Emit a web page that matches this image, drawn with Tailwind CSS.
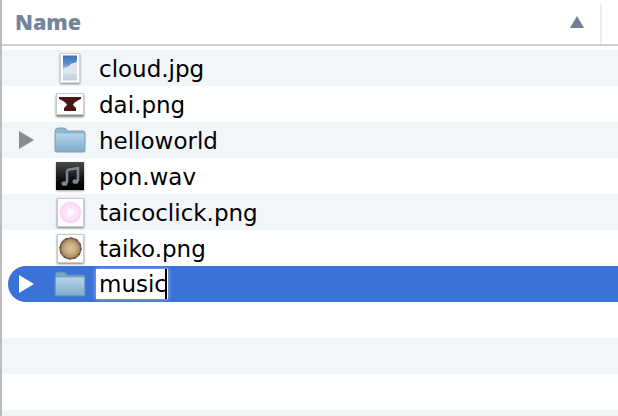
<!DOCTYPE html>
<html lang="en">
<head>
  <meta charset="UTF-8">
  <title>Finder list</title>
  <script src="https://cdn.jsdelivr.net/npm/@tailwindcss/browser@4"></script>
</head>
<body class="bg-white overflow-hidden">
  <div class="w-[618px] h-[416px] overflow-hidden border-l-2 border-[#bdbdbd] font-['DejaVu_Sans',sans-serif] text-black">
    <!-- Header -->
    <div class="h-[46px] border-b-2 border-[#cfcfcf] flex items-center relative">
      <span class="ml-[13px] text-[21.5px] font-extrabold text-[#76849a] font-['Open_Sans',sans-serif]">Name</span>
      <svg class="absolute left-[568px] top-[16px]" width="14" height="12" viewBox="0 0 14 12"><path d="M7 0L14 12H0Z" fill="#6f7f95"/></svg>
      <div class="absolute left-[598px] top-[4px] w-[2px] h-[40px] bg-[#ececec]"></div>
    </div>
    <div class="h-[4px]"></div>

    <!-- Rows -->
    <div class="h-[36px] bg-[#f2f5fa] flex items-center">
      <div class="w-[52px]"></div>
      <div class="w-[32px] flex justify-center drop-shadow-[0_1px_1px_rgba(0,0,0,0.45)]">
        <svg width="20" height="30" viewBox="0 0 20 30">
          <defs><linearGradient id="sky" x1="0" y1="0" x2="0" y2="1"><stop offset="0" stop-color="#3a70bd"/><stop offset="0.35" stop-color="#5f8ecb"/><stop offset="0.6" stop-color="#d5dfeb"/><stop offset="1" stop-color="#c3d0e0"/></linearGradient></defs>
          <rect x="0.500" y="0.500" width="19" height="29" fill="#fff" stroke="#d0d3d8"/>
          <rect x="3" y="2.500" width="14" height="25" fill="url(#sky)"/>
          <path d="M3 17C5 13 8 15 10 12C12 9 15 11 17 8V21H3Z" fill="#dde5ee"/>
        </svg>
      </div>
      <span class="ml-[13px] pt-[2px] text-[23px]">cloud.jpg</span>
    </div>

    <div class="h-[36px] flex items-center">
      <div class="w-[52px]"></div>
      <div class="w-[32px] flex justify-center drop-shadow-[0_2px_1px_rgba(0,0,0,0.5)]">
        <svg width="28" height="22" viewBox="0 0 28 22">
          <rect x="0.500" y="0.500" width="27" height="21" fill="#fff" stroke="#c8c8c8"/>
          <path d="M3 4H25V6C21 8 18 9 17 12L20 15V18H8V15L11 12C10 9 7 8 3 6Z" fill="#4a1512"/>
        </svg>
      </div>
      <span class="ml-[13px] pt-[2px] text-[23px]">dai.png</span>
    </div>

    <div class="h-[36px] bg-[#f2f5fa] flex items-center">
      <svg class="ml-[17px]" width="15" height="18" viewBox="0 0 15 18"><path d="M0 0L15 9L0 18Z" fill="#8b8b8b"/></svg>
      <div class="w-[20px]"></div>
      <div class="w-[32px] flex justify-center">
        <svg width="32" height="26" viewBox="0 0 32 26">
          <defs><linearGradient id="f1" x1="0" y1="0" x2="0" y2="1"><stop offset="0" stop-color="#b6d4e8"/><stop offset="1" stop-color="#7faccb"/></linearGradient></defs>
          <path d="M1 5Q1 1 4 1H10Q12 1 13 4H29Q31 4 31 6V24Q31 25 29 25H3Q1 25 1 24Z" fill="#91b8d3" stroke="#7a9fba"/>
          <rect x="1.500" y="6" width="29" height="18.500" rx="1" fill="url(#f1)" stroke="#7aa2bf" stroke-width="0.500"/>
        </svg>
      </div>
      <span class="ml-[13px] pt-[2px] text-[23px]">helloworld</span>
    </div>

    <div class="h-[36px] flex items-center">
      <div class="w-[52px]"></div>
      <div class="w-[32px] flex justify-center drop-shadow-[0_1px_1px_rgba(0,0,0,0.4)]">
        <svg width="28" height="28" viewBox="0 0 28 28">
          <defs><linearGradient id="blk" x1="0" y1="0" x2="0" y2="1"><stop offset="0" stop-color="#4a4a4c"/><stop offset="0.6" stop-color="#111"/><stop offset="1" stop-color="#000"/></linearGradient></defs>
          <rect width="28" height="28" fill="url(#blk)"/>
          <path d="M11 8L22 6V19" fill="none" stroke="#7f8597" stroke-width="2.500"/>
          <path d="M11 8V21" stroke="#7f8597" stroke-width="2.500"/>
          <ellipse cx="8.500" cy="21.500" rx="3" ry="2.300" fill="#7f8597"/>
          <ellipse cx="19.500" cy="19.500" rx="3" ry="2.300" fill="#7f8597"/>
        </svg>
      </div>
      <span class="ml-[13px] pt-[2px] text-[23px]">pon.wav</span>
    </div>

    <div class="h-[36px] bg-[#f2f5fa] flex items-center">
      <div class="w-[52px]"></div>
      <div class="w-[32px] flex justify-center drop-shadow-[0_1px_1px_rgba(0,0,0,0.5)]">
        <svg width="27" height="29" viewBox="0 0 27 29">
          <defs><radialGradient id="pink"><stop offset="0" stop-color="#fff"/><stop offset="0.5" stop-color="#fdeafa"/><stop offset="0.9" stop-color="#fbd3f3"/><stop offset="1" stop-color="#fde6f9"/></radialGradient></defs>
          <rect x="0.500" y="0.500" width="26" height="28" fill="#fff" stroke="#c8c8c8"/>
          <circle cx="13.500" cy="14.500" r="11" fill="url(#pink)"/>
          <circle cx="13.500" cy="14.500" r="5" fill="none" stroke="#fad9f4" stroke-width="1"/>
        </svg>
      </div>
      <span class="ml-[13px] pt-[2px] text-[23px]">taicoclick.png</span>
    </div>

    <div class="h-[36px] flex items-center">
      <div class="w-[52px]"></div>
      <div class="w-[32px] flex justify-center drop-shadow-[0_1px_1px_rgba(0,0,0,0.5)]">
        <svg width="27" height="29" viewBox="0 0 27 29">
          <defs><radialGradient id="drum"><stop offset="0" stop-color="#d9c39c"/><stop offset="0.5" stop-color="#c9ad80"/><stop offset="0.8" stop-color="#a88c66"/><stop offset="1" stop-color="#5f4440"/></radialGradient></defs>
          <rect x="0.500" y="0.500" width="26" height="28" fill="#fff" stroke="#c8c8c8"/>
          <circle cx="13.500" cy="14.500" r="11" fill="url(#drum)"/>
          <circle cx="13.500" cy="14.500" r="10.500" fill="none" stroke="#5a3f3c" stroke-width="1.200" stroke-dasharray="1.500 4"/>
        </svg>
      </div>
      <span class="ml-[13px] pt-[2px] text-[23px]">taiko.png</span>
    </div>

    <!-- Selected row, renaming -->
    <div class="h-[36px] ml-[6px] bg-[#3a72d8] rounded-l-[18px] flex items-center">
      <svg class="ml-[11px]" width="15" height="18" viewBox="0 0 15 18"><path d="M0 0L15 9L0 18Z" fill="#fff"/></svg>
      <div class="w-[20px]"></div>
      <div class="w-[32px] flex justify-center">
        <svg width="32" height="26" viewBox="0 0 32 26">
          <defs><linearGradient id="f2" x1="0" y1="0" x2="0" y2="1"><stop offset="0" stop-color="#b6d4e8"/><stop offset="1" stop-color="#7faccb"/></linearGradient></defs>
          <path d="M1 5Q1 1 4 1H10Q12 1 13 4H29Q31 4 31 6V24Q31 25 29 25H3Q1 25 1 24Z" fill="#7ba6c8" stroke="#5a8ab5"/>
          <rect x="1.500" y="6" width="29" height="18.500" rx="1" fill="url(#f2)" stroke="#5f8fbb" stroke-width="0.500"/>
        </svg>
      </div>
      <div class="ml-[10px] h-[30px] w-[72px] bg-white shadow-[0_0_4px_#a9c6ee] flex items-center pl-[3px] relative">
        <span class="pt-[1px] text-[23px]">music</span>
        <div class="absolute left-[69px] top-0 w-[2px] h-[30px] bg-black"></div>
      </div>
    </div>

    <div class="h-[36px]"></div>
    <div class="h-[36px] bg-[#f2f5fa]"></div>
    <div class="h-[36px]"></div>
    <div class="h-[36px] bg-[#f2f5fa]"></div>
  </div>
</body>
</html>
